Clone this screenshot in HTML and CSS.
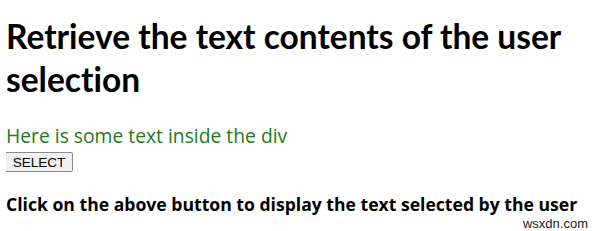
FILE: index.html
```html
<!DOCTYPE html>
<html lang="en">
<head>
    <meta charset="UTF-8" />
    <meta name="viewport" content="width=device-width, initial-scale=1.0" />
    <title>Retrieve selection</title>
    <link rel="stylesheet" href="styles.css">
</head>
<body>
    <h1>Retrieve the text contents of the user selection</h1>
    <div class="sample">Here is some text inside the div</div>
    <button class="select-btn">SELECT</button>
    <h3 class="note">Click on the above button to display the text selected by the user</h3>
    <div class="mark">wsxdn.com</div>
</body>
</html>
```
FILE: styles.css
```css
body {
    font-family: "Open Sans", sans-serif;
    margin: 0 6px;
    color: #000;
    background: #fff;
    position: relative;
    height: 231px;
    font-variant-ligatures: none;
}

h1 {
    font-family: Lato, "Open Sans", sans-serif;
    font-size: 33.5px;
    line-height: 43px;
    margin: 0;
    padding-top: 15px;
    font-weight: bold;
}

.sample {
    color: #1d7a1d;
    font-size: 19.3px;
    line-height: 24px;
    margin-top: 23px;
}

.select-btn {
    display: block;
    width: 68px;
    height: 20px;
    margin-top: 4px;
    margin-left: -1px;
    padding: 0;
    font-family: "Liberation Sans", Arial, sans-serif;
    font-size: 13.5px;
    color: #000;
    border: 1px solid #8a8a8a;
    border-radius: 2px;
    background: #f0f0f0;
}

.note {
    font-size: 17.6px;
    line-height: 20px;
    margin: 22px 0 0;
}

.mark {
    position: absolute;
    right: 6px;
    top: 216px;
    font-family: "Liberation Sans", Arial, sans-serif;
    font-size: 13px;
    line-height: 15px;
    color: #222;
}
```
